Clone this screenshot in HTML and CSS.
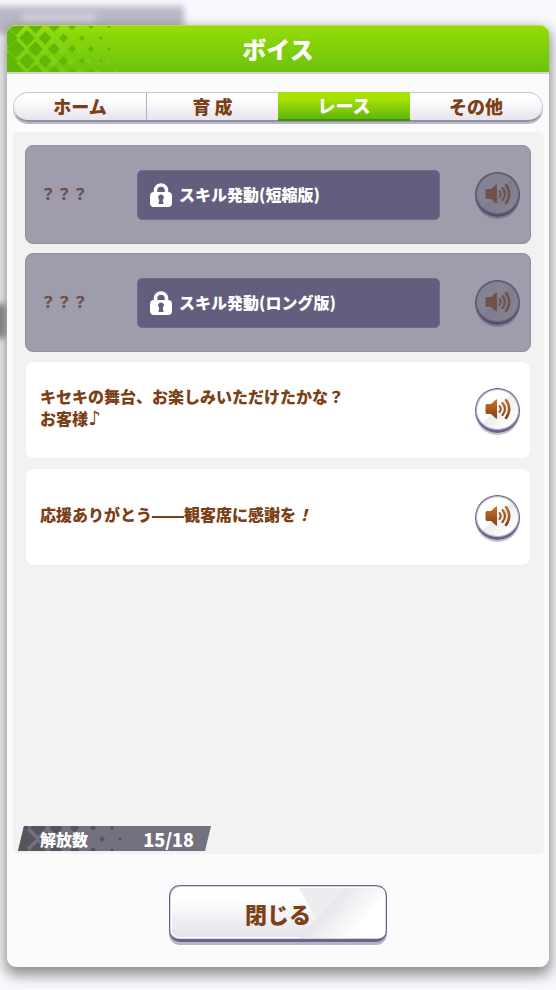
FILE: index.html
```html
<!DOCTYPE html>
<html lang="ja">
<head>
<meta charset="utf-8">
<meta name="viewport" content="width=device-width, initial-scale=1">
<title>ボイス</title>
<link rel="stylesheet" href="styles.css">
</head>
<body>
<svg class="defs" aria-hidden="true">
  <defs>
    <linearGradient id="copper" x1="0" y1="0" x2="0" y2="22" gradientUnits="userSpaceOnUse">
      <stop offset="0" stop-color="#c87630"/>
      <stop offset="1" stop-color="#7d3e14"/>
    </linearGradient>
    <symbol id="speaker" viewBox="0 0 26 22">
      <path class="cone" d="M2 6h4l5-4.500q1-.7 1 .5v18q0 1.200-1 .5L6 16H2q-1.500 0-1.500-1.500v-7Q.5 6 2 6z"/>
      <g class="waves" fill="none" stroke-linecap="round">
        <path stroke-width="2" d="M14.500 8q2.500 3 0 6"/>
        <path stroke-width="2.200" d="M17.500 5q5 6 0 12"/>
        <path stroke-width="2.600" d="M21 2q6.500 9 0 18"/>
      </g>
    </symbol>
    <symbol id="lock" viewBox="0 0 22 24">
      <path fill="none" stroke="#fff" stroke-width="3.500" d="M5.500 12V7.500a5.500 5.500 0 0 1 11 0V12"/>
      <rect x="0" y="9" width="22" height="15" rx="4" fill="#fff"/>
      <path fill="#625d7d" d="M11 11.500a3 3 0 0 1 1.700 5.400l.9 4.100H8.400l.9-4.100A3 3 0 0 1 11 11.500z"/>
    </symbol>
    <g id="diamonds-a">
      <path d="M-7 0l9-9 9 9-9 9zM12 0l8-8 8 8-8 8zM31.500 0l6.500-6.500 6.500 6.500-6.500 6.500zM52 0l4.500-4.500L61 0l-4.500 4.500zM72 0l3-3 3 3-3 3zM92 0l2-2 2 2-2 2z"/>
    </g>
    <g id="diamonds-b">
      <path d="M0 0l9-9 9 9-9 9zM21 0l7.500-7.500L36 0l-7.500 7.500zM41 0l6-6 6 6-6 6zM61 0l4-4 4 4-4 4zM81 0l3-3 3 3-3 3zM100 0l2-2 2 2-2 2z"/>
    </g>
  </defs>
</svg>

<div class="backdrop" aria-hidden="true"><i class="smear smear-title"></i><i class="smear smear-side"></i></div>

<main class="dialog">
  <header class="title-bar">
    <svg class="lattice" width="112" height="47" aria-hidden="true">
      <g fill="#86d821" opacity=".5">
        <use href="#diamonds-a" x="7" y="12"/><use href="#diamonds-b" x="7" y="23"/><use href="#diamonds-a" x="7" y="35"/><use href="#diamonds-b" x="7" y="46"/>
      </g>
      <g fill="#61b705">
        <use href="#diamonds-b" y="0"/><use href="#diamonds-a" y="12"/><use href="#diamonds-b" y="23"/><use href="#diamonds-a" y="35"/><use href="#diamonds-b" y="46"/>
      </g>
    </svg>
    <h1>ボイス</h1>
  </header>

  <nav class="tabs" role="tablist">
    <button class="tab" type="button" role="tab">ホーム</button>
    <button class="tab" type="button" role="tab">育 成</button>
    <button class="tab active" type="button" role="tab" aria-selected="true">レース</button>
    <button class="tab" type="button" role="tab">その他</button>
  </nav>

  <section class="panel">
    <ul class="voices">
      <li class="voice locked">
        <span class="unknown">？？？</span>
        <p class="condition"><svg class="lock"><use href="#lock"/></svg><span>スキル発動(短縮版)</span></p>
        <button class="play" type="button" disabled aria-label="再生"><svg><use href="#speaker"/></svg></button>
      </li>
      <li class="voice locked">
        <span class="unknown">？？？</span>
        <p class="condition"><svg class="lock"><use href="#lock"/></svg><span>スキル発動(ロング版)</span></p>
        <button class="play" type="button" disabled aria-label="再生"><svg><use href="#speaker"/></svg></button>
      </li>
      <li class="voice">
        <p class="line">キセキの舞台、お楽しみいただけたかな？<br>お客様<span class="note">♪</span></p>
        <button class="play" type="button" aria-label="再生"><svg><use href="#speaker"/></svg></button>
      </li>
      <li class="voice">
        <p class="line">応援ありがとう<span class="dash">――</span>観客席に感謝を<em>！</em></p>
        <button class="play" type="button" aria-label="再生"><svg><use href="#speaker"/></svg></button>
      </li>
    </ul>
    <div class="counter">
      <svg class="lattice" width="112" height="25" aria-hidden="true">
        <g fill="#55535c">
          <use href="#diamonds-a" y="2"/><use href="#diamonds-b" y="13"/><use href="#diamonds-a" y="24"/>
        </g>
      </svg>
      <span>解放数</span><span class="count">15/18</span>
    </div>
  </section>

  <footer class="actions">
    <button class="close" type="button">
      <svg class="sheen" viewBox="0 0 86 52" preserveAspectRatio="none" aria-hidden="true">
        <defs>
          <linearGradient id="sheen-fade" x1="22" y1="26" x2="52" y2="52" gradientUnits="userSpaceOnUse">
            <stop offset="0" stop-color="#e6e5ea"/>
            <stop offset="1" stop-color="#fff"/>
          </linearGradient>
        </defs>
        <path fill="#ededf0" d="M0 1h46L17 33z"/>
        <path fill="url(#sheen-fade)" d="M46 1h40v51H0z"/>
      </svg>
      <span>閉じる</span>
    </button>
  </footer>
</main>
</body>
</html>
```

FILE: styles.css
```css
* {
  box-sizing: border-box;
}

body {
  margin: 0;
  padding: 25px 7px 23px;
  min-height: 100vh;
  display: flex;
  background: #faf9fd;
  color: #7b4015;
  font-family: "Noto Sans CJK JP", sans-serif;
  font-size: 16px;
  font-weight: 900;
  line-height: 22px;
}

h1, p, ul {
  margin: 0;
  padding: 0;
}

button {
  margin: 0;
  padding: 0;
  border: 0;
  color: inherit;
  font: inherit;
}

.defs {
  position: absolute;
  width: 0;
  height: 0;
}

.backdrop {
  position: absolute;
  inset: 0;
  overflow: hidden;
}

.smear {
  position: absolute;
  filter: blur(3px);
}

.smear-title {
  top: 6px;
  left: -8px;
  width: 192px;
  height: 28px;
  background:
    linear-gradient(#d6d4dd, #d6d4dd) 30px 8px / 74px 8px no-repeat,
    #bbb8c7;
}

.smear-side {
  top: 304px;
  left: -8px;
  width: 14px;
  height: 34px;
  background: #8d8b94;
}

.dialog {
  position: relative;
  flex: 1;
  min-width: 0;
  display: flex;
  flex-direction: column;
  border-radius: 9px;
  background: #fbfbfb;
  box-shadow: 0 6px 14px 2px rgba(50, 50, 50, .55);
}

.title-bar {
  position: relative;
  height: 49px;
  display: grid;
  place-items: center;
  overflow: hidden;
  border-top: 1px solid #aee63a;
  border-bottom: 2px solid #d4d5d2;
  border-radius: 9px 9px 0 0;
  background: linear-gradient(#96dc07, #6ac30d);
  color: #fff;
}

.title-bar h1 {
  font-size: 24px;
  font-weight: 900;
  line-height: 32px;
}

.lattice {
  position: absolute;
  top: 0;
  left: 0;
}

.tabs {
  display: grid;
  grid-template-columns: repeat(4, 1fr);
  height: 30px;
  margin: 18px 6px 0;
  border: 1px solid #c8c7d0;
  border-bottom: 2px solid #93919e;
  border-radius: 16px;
  background: linear-gradient(#fff 20%, #e7e4ed);
  box-shadow: 0 2px 0 #b9b6c7;
}

.tab {
  padding-bottom: 2px;
  background: none;
  font-size: 18px;
  line-height: 24px;
}

.tab + .tab {
  border-left: 1px solid #b4b2be;
}

.tab.active {
  margin: -1px 0;
  border: 0;
  border-bottom: 2px solid #43900b;
  background: linear-gradient(#a7e104 25%, #5eb60d);
  color: #fff;
}

.tab.active + .tab {
  border-left: 0;
}

.panel {
  flex: 1;
  display: flex;
  flex-direction: column;
  margin: 10px 5px 0 6px;
  padding: 13px 13px 3px 12px;
  border-radius: 5px;
  background: #f2f2f2;
}

.voices {
  display: grid;
  gap: 9px;
  list-style: none;
}

.voice {
  height: 98px;
  display: flex;
  align-items: center;
  padding: 0 10px 0 14px;
  border: 1px solid #efefef;
  border-radius: 8px;
  background: #fff;
}

.locked {
  height: 99px;
  border-color: #918fa0;
  background: #9f9dac;
}

.unknown {
  width: 97px;
  padding-bottom: 4px;
  color: #70504f;
}

.condition {
  flex: 1;
  height: 50px;
  display: flex;
  align-items: center;
  gap: 7px;
  margin-right: 35px;
  padding-left: 12px;
  border: 1px solid #706b8b;
  border-radius: 5px;
  background: #635e7e;
  color: #fff;
}

.condition span {
  padding-bottom: 2px;
}

.lock {
  width: 22px;
  height: 24px;
}

.line {
  flex: 1;
  padding-bottom: 6px;
}

.note {
  font-family: "DejaVu Sans", sans-serif;
  font-size: 20px;
  font-weight: 700;
  line-height: 1;
}

.dash {
  font-family: "DejaVu Sans", sans-serif;
  font-weight: 700;
  line-height: 1;
}

.play {
  --ink: url(#copper);
  width: 45px;
  height: 45px;
  display: grid;
  place-items: center;
  border: 1px solid #69628c;
  border-bottom-width: 3px;
  border-radius: 50%;
  background: linear-gradient(135deg, #fff 48%, #ededee 50%, #fff 85%);
  box-shadow: 0 2px 0 #c5c2d1, inset 0 0 0 1px #b5b0c8;
}

.play svg {
  width: 26px;
  height: 22px;
}

.cone {
  fill: var(--ink);
}

.waves {
  stroke: var(--ink);
}

.locked .play {
  --ink: #72504c;
  border-color: #55506d;
  background: linear-gradient(135deg, #858294 48%, #7e7b8c 50%, #858294 85%);
  box-shadow: 0 2px 0 #807c92, inset 0 0 0 1px #6c6881;
}

.counter {
  position: relative;
  width: 193px;
  height: 25px;
  display: flex;
  justify-content: space-between;
  align-items: center;
  margin: auto 0 0 -7px;
  padding: 0 17px 0 22px;
  background: #737080;
  clip-path: polygon(6px 0, 100% 0, calc(100% - 6px) 100%, 0 100%);
  color: #fff;
}

.counter span {
  position: relative;
}

.counter .count {
  font-size: 18px;
}

.actions {
  display: flex;
  justify-content: center;
  padding: 31px 0 25px;
}

.close {
  position: relative;
  width: 218px;
  height: 57px;
  overflow: hidden;
  border: 1px solid #69648a;
  border-bottom-width: 3px;
  border-radius: 11px;
  background: linear-gradient(#fff 25%, #e4e0e9);
  box-shadow: inset 0 0 0 1px #d5d2de, inset 0 0 0 2px #fff, 0 3px 0 #b6b3c6;
  font-size: 22px;
}

.close span {
  position: relative;
}

.sheen {
  position: absolute;
  top: 1px;
  right: 1px;
  width: 86px;
  height: 51px;
}
```
